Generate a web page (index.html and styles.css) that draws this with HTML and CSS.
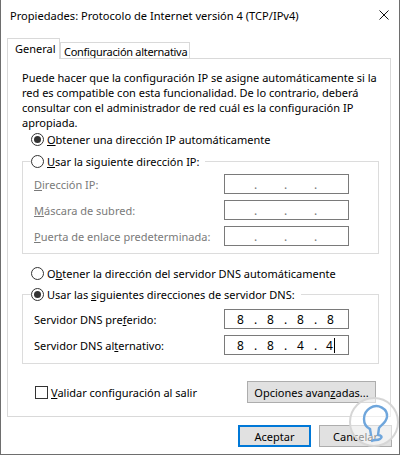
FILE: index.html
```
<!DOCTYPE html>
<html lang="es">
<head>
<meta charset="utf-8">
<title>Propiedades: Protocolo de Internet versión 4 (TCP/IPv4)</title>
<link rel="stylesheet" href="styles.css">
</head>
<body>
<div class="window">
  <div class="titlebar">
    <span class="title">Propiedades: Protocolo de Internet versión 4 (TCP/IPv4)</span>
    <span class="close"><svg width="10" height="10" viewBox="0 0 10 10"><path d="M0.5 0.5 L9.5 9.5 M9.5 0.5 L0.5 9.5" stroke="#111" stroke-width="1" fill="none"/></svg></span>
  </div>
  <div class="tabs">
    <div class="tab active">General</div>
    <div class="tab alt">Configuración alternativa</div>
  </div>
  <div class="panel">
    <p class="intro">Puede hacer que la configuración IP se asigne automáticamente si la<br>red es compatible con esta funcionalidad. De lo contrario, deberá<br>consultar con el administrador de red cuál es la configuración IP<br>apropiada.</p>

    <div class="option first"><span class="radio checked"></span><span><u>O</u>btener una dirección IP automáticamente</span></div>

    <fieldset class="group g1">
      <legend class="legend"><span class="radio"></span><span><u>U</u>sar la siguiente dirección IP:</span></legend>
      <div class="rows">
        <div class="row disabled"><span><u>D</u>irección IP:</span><span class="ip"><span class="oct"></span><span class="dot">.</span><span class="oct"></span><span class="dot">.</span><span class="oct"></span><span class="dot">.</span><span class="oct"></span></span></div>
        <div class="row disabled"><span><u>M</u>áscara de subred:</span><span class="ip"><span class="oct"></span><span class="dot">.</span><span class="oct"></span><span class="dot">.</span><span class="oct"></span><span class="dot">.</span><span class="oct"></span></span></div>
        <div class="row disabled"><span><u>P</u>uerta de enlace predeterminada:</span><span class="ip"><span class="oct"></span><span class="dot">.</span><span class="oct"></span><span class="dot">.</span><span class="oct"></span><span class="dot">.</span><span class="oct"></span></span></div>
      </div>
    </fieldset>

    <div class="option dns"><span class="radio"></span><span>O<u>b</u>tener la dirección del servidor DNS automáticamente</span></div>

    <fieldset class="group g2">
      <legend class="legend"><span class="radio checked"></span><span>Usar las <u>s</u>iguientes direcciones de servidor DNS:</span></legend>
      <div class="rows">
        <div class="row"><span>Servidor DNS pre<u>f</u>erido:</span><span class="ip"><span class="oct">8</span><span class="dot">.</span><span class="oct">8</span><span class="dot">.</span><span class="oct">8</span><span class="dot">.</span><span class="oct">8</span></span></div>
        <div class="row"><span>Servidor DNS al<u>t</u>ernativo:</span><span class="ip"><span class="oct">8</span><span class="dot">.</span><span class="oct">8</span><span class="dot">.</span><span class="oct">4</span><span class="dot">.</span><span class="oct">4<span class="caret"></span></span></span></div>
      </div>
    </fieldset>

    <div class="bottomrow">
      <label class="check"><span class="box"></span><span><u>V</u>alidar configuración al salir</span></label>
      <button class="btn adv">Opciones avan<u>z</u>adas...</button>
    </div>
  </div>
  <div class="actions">
    <button class="btn default">Aceptar</button>
    <button class="btn">Cancelar</button>
  </div>
  <svg class="watermark" width="52" height="56" viewBox="0 0 52 56">
    <circle cx="26" cy="27" r="24" fill="rgba(255,255,255,0.55)" stroke="#d6d6d6" stroke-width="2"/>
    <path d="M22 34 C14 30 14 18 22 13 C30 8 40 14 39 22 C38 28 33 30 31 33 L30 40 C33 40 35 42 32 44 C29 46 26 44 24 46" fill="none" stroke="#6fa6dc" stroke-width="2.4" stroke-linecap="round" stroke-linejoin="round"/>
    <path d="M22 34 L23 40" fill="none" stroke="#6fa6dc" stroke-width="2.4" stroke-linecap="round"/>
  </svg>
</div>
</body>
</html>
```
FILE: styles.css
```
* { box-sizing: border-box; }
html, body { margin: 0; padding: 0; background: #ffffff; }
body {
  font-family: "Noto Sans", "Liberation Sans", sans-serif;
  font-size: 11px;
  color: #000;
}
.window {
  position: relative;
  width: 400px;
  height: 455px;
  background: #ffffff;
  border-left: 1px solid #6e6e6e;
  border-right: 1px solid #6e6e6e;
  border-bottom: 1px solid #6e6e6e;
  display: flex;
  flex-direction: column;
  overflow: hidden;
}
.titlebar {
  height: 30px;
  flex: none;
  display: flex;
  align-items: center;
  justify-content: space-between;
  padding-left: 9px;
  background: #fff;
}
.title { white-space: nowrap; line-height: 15px; font-size: 11.1px; }
.close {
  width: 30px;
  height: 30px;
  display: flex;
  align-items: center;
  justify-content: center;
}
.tabs {
  margin-top: 8px;
  padding-left: 6px;
  display: flex;
  align-items: flex-end;
  height: 21px;
  flex: none;
}
.tab {
  flex: none;
  height: 17px;
  padding: 0 0 0 3px;
  border: 1px solid #d9d9d9;
  border-bottom: none;
  background: #fff;
  line-height: 15px;
  white-space: nowrap;
  display: flex;
  align-items: center;
  overflow: hidden;
}
.tab.active {
  position: relative;
  z-index: 1;
  width: 53px;
  height: 21px;
  padding: 0 0 2px 7px;
}
.tab.alt { width: 130px; letter-spacing: -0.3px; }
.panel {
  margin: -1px 8px 0 6px;
  height: 359px;
  flex: none;
  border: 1px solid #d9d9d9;
  background: #fff;
  padding: 11px 11px 0 14px;
}
.intro {
  margin: 0;
  line-height: 15px;
  white-space: nowrap;
}
.option {
  display: flex;
  align-items: center;
  height: 15px;
  line-height: 15px;
  padding-left: 9px;
  white-space: nowrap;
}
.option.first { margin-top: 2px; }
.option.dns { margin-top: 12px; }
.radio {
  width: 13px;
  height: 13px;
  border: 1px solid #333;
  border-radius: 50%;
  background: #fff;
  margin-right: 3px;
  flex: none;
  display: flex;
  align-items: center;
  justify-content: center;
}
.radio.checked::after {
  content: "";
  width: 7px;
  height: 7px;
  border-radius: 50%;
  background: #333;
}
.group {
  margin: 0;
  padding: 0;
  border: 1px solid #dcdcdc;
  min-width: 0;
}
.g1 { margin-top: 7px; }
.g2 { margin-top: 6px; }
.legend {
  margin-left: 8px;
  padding: 0 6px 0 0;
  display: flex;
  align-items: center;
  height: 15px;
  line-height: 15px;
  white-space: nowrap;
}
.rows {
  display: flex;
  flex-direction: column;
  gap: 6px;
  padding: 5px 29px 7px 11px;
}
.g2 .rows { padding-top: 7px; padding-bottom: 8px; }
.row {
  height: 20px;
  display: flex;
  align-items: center;
  justify-content: space-between;
  white-space: nowrap;
}
.row.disabled { color: #7a7a7a; }
.ip {
  width: 125px;
  height: 20px;
  border: 1px solid #7a7a7a;
  background: #fff;
  display: flex;
  align-items: center;
  padding-left: 3px;
  color: #000;
  font-size: 12px;
}
.row.disabled .ip { color: #7a7a7a; }
.oct {
  width: 25px;
  text-align: center;
  display: flex;
  justify-content: center;
  align-items: center;
}
.dot { width: 5px; text-align: center; }
.caret {
  display: inline-block;
  width: 1px;
  height: 15px;
  background: #000;
  margin-left: 1px;
}
.bottomrow {
  margin-top: 17px;
  height: 22px;
  display: flex;
  align-items: center;
  justify-content: space-between;
  padding-left: 13px;
  padding-right: 3px;
}
.check {
  display: flex;
  align-items: center;
  white-space: nowrap;
}
.box {
  width: 13px;
  height: 13px;
  border: 1px solid #333;
  background: #fff;
  margin-right: 3px;
}
.btn {
  font: inherit;
  color: #000;
  background: #e1e1e1;
  border: 1px solid #adadad;
  height: 22px;
  padding: 0;
  line-height: 15px;
  white-space: nowrap;
}
.adv { width: 129px; }
.actions {
  margin-top: 8px;
  display: flex;
  justify-content: flex-end;
  gap: 8px;
  padding-right: 7px;
}
.actions .btn { width: 73px; }
.btn.default { border: 2px solid #0078d7; }
.watermark {
  position: absolute;
  left: 347px;
  top: 395px;
}
```
